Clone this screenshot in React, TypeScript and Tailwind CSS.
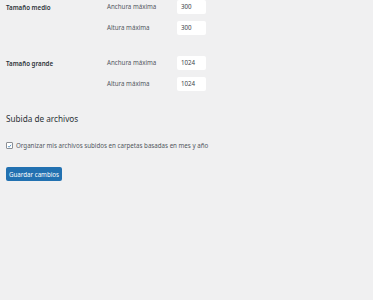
import React from 'react';

const font = { fontFamily: '"Noto Sans", "Open Sans", sans-serif' };

const SizeInput: React.FC<{ label: string; value: string }> = ({ label, value }) => (
  <div className="flex items-center h-[14px]">
    <span className="w-[70px] text-[6.2px] text-[#50575e]">{label}</span>
    <div className="w-[29px] h-[14px] bg-white rounded-[2px] flex items-center px-[4px] text-[6.2px] text-[#3c434a]">
      {value}
    </div>
  </div>
);

export default function App() {
  return (
    <div className="w-[373px] h-[300px] bg-[#f0f0f1] overflow-hidden pl-[6px]" style={font}>
      <div className="flex">
        <div className="w-[101px] pt-[3px] text-[6.2px] font-semibold text-[#2c3338]">Tamaño medio</div>
        <div className="flex flex-col gap-[7px]">
          <SizeInput label="Anchura máxima" value="300" />
          <SizeInput label="Altura máxima" value="300" />
        </div>
      </div>
      <div className="flex mt-[21px]">
        <div className="w-[101px] pt-[3px] text-[6.2px] font-semibold text-[#2c3338]">Tamaño grande</div>
        <div className="flex flex-col gap-[7px]">
          <SizeInput label="Anchura máxima" value="1024" />
          <SizeInput label="Altura máxima" value="1024" />
        </div>
      </div>
      <h2 className="mt-[22px] text-[8.2px] font-normal text-[#2c3338] leading-[12px]">Subida de archivos</h2>
      <label className="mt-[16px] flex items-center gap-[3px] text-[6.2px] text-[#50575e]">
        <span className="w-[7px] h-[7px] bg-white border border-[#8c8f94] rounded-[1px] flex items-center justify-center">
          <svg viewBox="0 0 10 10" className="w-[6px] h-[6px]">
            <path d="M2 5.2 L4.2 7.4 L8.2 2.6" fill="none" stroke="#2271b1" strokeWidth="1.4" />
          </svg>
        </span>
        Organizar mis archivos subidos en carpetas basadas en mes y año
      </label>
      <button className="mt-[17px] h-[14px] w-[56px] bg-[#2271b1] rounded-[2px] text-white text-[6.2px] flex items-center justify-center">
        Guardar cambios
      </button>
    </div>
  );
}
